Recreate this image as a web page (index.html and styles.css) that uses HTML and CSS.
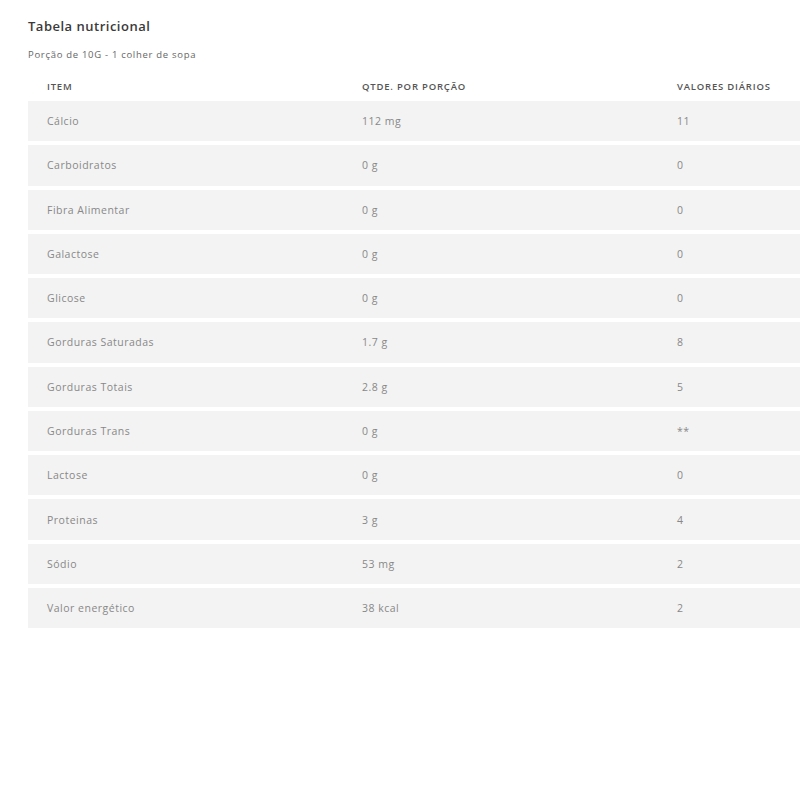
FILE: index.html
```html
<!DOCTYPE html>
<html lang="pt-BR">
<head>
<meta charset="utf-8">
<title>Tabela nutricional</title>
<link rel="stylesheet" href="styles.css">
</head>
<body>
<section class="nutri">
  <h2 class="nutri-title">Tabela nutricional</h2>
  <p class="nutri-portion">Porção de 10G - 1 colher de sopa</p>
  <table class="nutri-table">
    <colgroup><col class="col-item"><col class="col-qty"><col></colgroup>
    <thead>
      <tr><th>Item</th><th>Qtde. por porção</th><th>Valores diários</th></tr>
    </thead>
    <tbody>
      <tr><td>Cálcio</td><td>112 mg</td><td>11</td></tr>
      <tr><td>Carboidratos</td><td>0 g</td><td>0</td></tr>
      <tr><td>Fibra Alimentar</td><td>0 g</td><td>0</td></tr>
      <tr><td>Galactose</td><td>0 g</td><td>0</td></tr>
      <tr><td>Glicose</td><td>0 g</td><td>0</td></tr>
      <tr><td>Gorduras Saturadas</td><td>1.7 g</td><td>8</td></tr>
      <tr><td>Gorduras Totais</td><td>2.8 g</td><td>5</td></tr>
      <tr><td>Gorduras Trans</td><td>0 g</td><td>**</td></tr>
      <tr><td>Lactose</td><td>0 g</td><td>0</td></tr>
      <tr><td>Proteinas</td><td>3 g</td><td>4</td></tr>
      <tr><td>Sódio</td><td>53 mg</td><td>2</td></tr>
      <tr><td>Valor energético</td><td>38 kcal</td><td>2</td></tr>
    </tbody>
  </table>
</section>
</body>
</html>
```

FILE: styles.css
```css
html, body {
  margin: 0;
  padding: 0;
  background: #fff;
}
body {
  font-family: "Open Sans", "Noto Sans", sans-serif;
  color: #555;
}
.nutri {
  padding: 17px 0 0 28px;
}
.nutri-title {
  margin: 0;
  font-size: 13px;
  line-height: 18px;
  font-weight: 600;
  letter-spacing: 0.5px;
  color: #3a3a3a;
}
.nutri-portion {
  margin: 13px 0 0;
  font-size: 9.5px;
  line-height: 14px;
  letter-spacing: 0.7px;
  color: #666;
}
.nutri-table {
  margin-top: 9px;
  width: 100%;
  table-layout: fixed;
  border-collapse: separate;
  border-spacing: 0 4px;
}
.col-item,
.col-qty {
  width: 315px;
}
.nutri-table th {
  height: 22px;
  padding: 0 0 0 19px;
  text-align: left;
  vertical-align: middle;
  font-size: 9.5px;
  font-weight: 600;
  letter-spacing: 0.8px;
  text-transform: uppercase;
  color: #555;
}
.nutri-table td {
  height: 40.27px;
  padding: 0 0 0 19px;
  background: #f3f3f3;
  font-size: 10.5px;
  letter-spacing: 0.5px;
  color: #888;
  vertical-align: middle;
}
```
